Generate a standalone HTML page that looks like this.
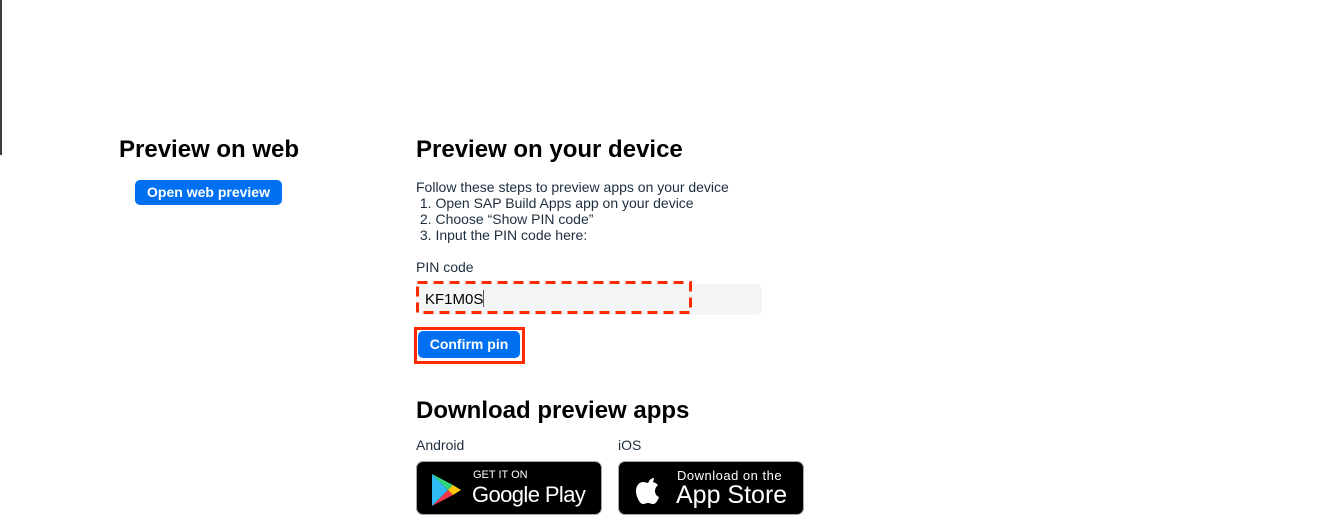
<!DOCTYPE html>
<html><head><meta charset="utf-8"><style>
*{margin:0;padding:0;box-sizing:border-box}
body{width:1343px;height:529px;background:#fff;font-family:"Liberation Sans",Arial,sans-serif;position:relative;overflow:hidden;color:#1d2d3e}
.a{position:absolute;white-space:nowrap}
h2{position:absolute;font-size:24px;font-weight:bold;color:#000;white-space:nowrap;line-height:28px}
.btn{position:absolute;background:#0070f2;color:#fff;font-weight:bold;font-size:14px;border-radius:5px;text-align:center}
.t{font-size:14px;line-height:16px;color:#1d2d3e}
.badge{position:absolute;background:#000;border:1px solid #a6a6a6;border-radius:7px;color:#fff}
</style></head><body>
<div class="a" style="left:0;top:0;width:2px;height:155px;background:#3a3d42"></div>
<h2 style="left:119px;top:136px">Preview on web</h2>
<div class="btn" style="left:135px;top:180px;width:147px;height:25px;line-height:25px">Open web preview</div>
<h2 style="left:416px;top:136px">Preview on your device</h2>
<div class="a t" style="left:416px;top:179px">Follow these steps to preview apps on your device<br>&nbsp;1. Open SAP Build Apps app on your device<br>&nbsp;2. Choose “Show PIN code”<br>&nbsp;3. Input the PIN code here:</div>
<div class="a t" style="left:416px;top:259px">PIN code</div>
<div class="a" style="left:416px;top:284px;width:346px;height:31px;background:#f4f5f6;border-radius:6px"></div>
<svg class="a" style="left:415px;top:280px" width="278" height="35"><rect x="2.5" y="2.5" width="273" height="30" fill="none" stroke="#ff2a00" stroke-width="3" stroke-dasharray="10 6"/></svg>
<div class="a" style="left:425px;top:290px;font-size:15px;color:#000">KF1M0S<span style="display:inline-block;width:1px;height:17px;background:#555;vertical-align:-3px"></span></div>
<div class="a" style="left:414px;top:327px;width:111px;height:37px;border:3px solid #ff2a00"></div>
<div class="btn" style="left:418px;top:331px;width:102px;height:27px;line-height:27px">Confirm pin</div>
<h2 style="left:416px;top:397px">Download preview apps</h2>
<div class="a t" style="left:416px;top:437px">Android</div>
<div class="a t" style="left:618px;top:437px">iOS</div>
<div class="badge" style="left:416px;top:461px;width:186px;height:54px">
<svg style="position:absolute;left:13px;top:11px" width="32" height="34" viewBox="0 0 32 34"><path d="M2 1L18 17L2 33Z" fill="#2fb8f4"/><path d="M2 1L23 12L18 17Z" fill="#32d67a"/><path d="M2 33L23 22L18 17Z" fill="#f0384c"/><path d="M23 12L31 17L23 22L18 17Z" fill="#ffc90a"/></svg>
<div class="a" style="left:56px;top:7px;font-size:11px">GET IT ON</div>
<div class="a" style="left:55px;top:20px;font-size:22px;letter-spacing:-0.6px">Google Play</div>
</div>
<div class="badge" style="left:618px;top:461px;width:186px;height:54px">
<svg style="position:absolute;left:15px;top:10px" width="30" height="34" viewBox="0 0 30 34"><path d="M15 9c2-3 5-3 5-3s0 3-2 5-4 2-4 2 0-2 1-4z" fill="#fff"/><path d="M15 11c-2 0-4-1-6-1-4 0-7 4-7 9 0 6 4 13 7 13 2 0 3-1 5-1s3 1 5 1c3 0 5-4 6-7-3-1-4-4-4-6 0-3 2-5 3-6-2-2-4-3-6-3-1 0-2 1-3 1z" fill="#fff"/></svg>
<div class="a" style="left:58px;top:6px;font-size:13px;letter-spacing:.5px">Download on the</div>
<div class="a" style="left:57px;top:19px;font-size:25px">App Store</div>
</div>
</body></html>
